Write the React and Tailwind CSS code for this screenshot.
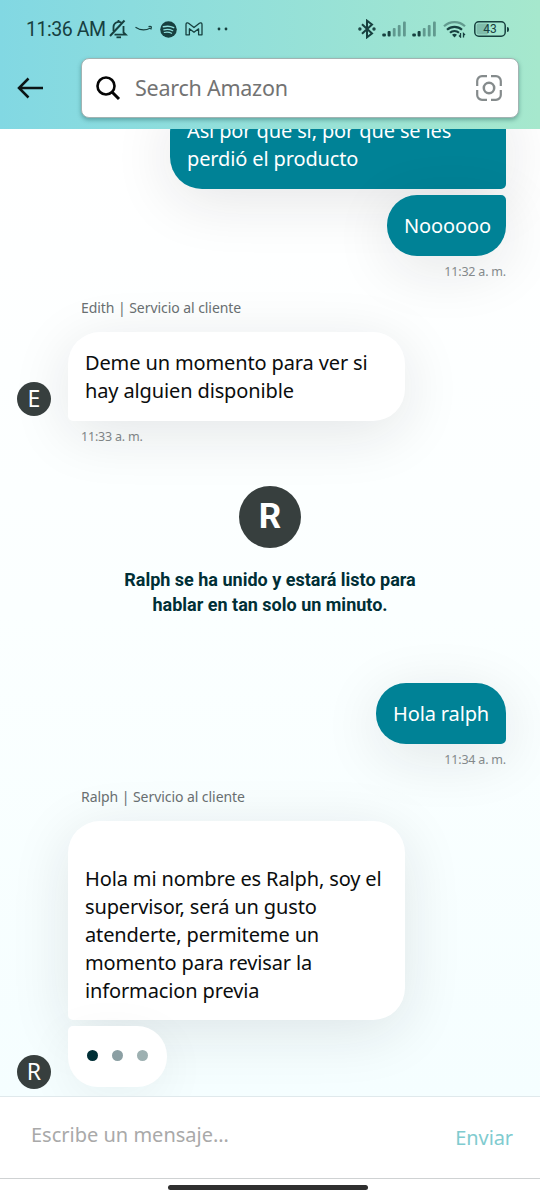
import React from 'react';
import { Fragment } from 'react';

const SHADOW = 'shadow-[0_12px_60px_rgba(25,30,32,0.11)]';

function SignalBars() {
    return (
        <svg width="25" height="16" viewBox="0 0 25 16" fill="#17403f">
            <rect x="0.3" y="12.4" width="3.6" height="3.1" rx="1" />
            <rect x="5.6" y="10" width="3" height="5.5" rx="1" />
            <g opacity="0.45">
                <rect x="10.8" y="7" width="2.8" height="8.500" rx="1" />
                <rect x="15.8" y="4" width="2.8" height="11.500" rx="1" />
                <rect x="21" y="0.500" width="2.800" height="15" rx="1" />
            </g>
        </svg>
    );
}

function StatusBar() {
    return (
        <div className="h-[58px] flex items-center text-[#17403f]">
            <span className="ml-[26px] w-[80px] text-[19.5px] leading-6 tracking-[-0.45px] whitespace-nowrap pt-px font-['Roboto',sans-serif]">11:36 AM</span>
            {/* muted bell */}
            <svg className="ml-[3px]" width="19" height="20" viewBox="0 0 19 20" fill="none" stroke="currentColor" strokeWidth="1.8">
                <path d="M4.500 12V8a5.200 5.200 0 0 1 8-4.300M14.500 7v6.500l2.300 2.200H5.500" />
                <path d="M9.500 2.800V1" />
                <path d="M1 17L15.500 1.500" strokeWidth="2" />
                <path d="M7.500 18.300h4.500" strokeWidth="1.800" />
            </svg>
            <svg className="ml-[7px]" width="18" height="8" viewBox="0 0 18 8" fill="none" stroke="currentColor" strokeWidth="1.2">
                <path d="M0.500 2.300C5 5.300 11 5.500 15.500 3M13.500 1.600c3-.6 3.500 0 2.300 2.800" />
            </svg>
            <svg className="ml-[7px]" width="17" height="17" viewBox="0 0 17 17">
                <circle cx="8.5" cy="8.5" r="8.3" fill="#17403f" />
                <g fill="none" stroke="#8edfdc" strokeLinecap="round">
                    <path d="M3.400 5.800c3.400-1 7.400-.7 10.300.9" strokeWidth="1.500" />
                    <path d="M3.800 8.800c3-.8 6.300-.5 8.900.9" strokeWidth="1.200" />
                    <path d="M4.200 11.500c2.600-.6 5.200-.4 7.400.8" strokeWidth="1.100" />
                </g>
            </svg>
            {/* outlined envelope M */}
            <svg className="ml-[8px]" width="18" height="14" viewBox="0 0 18 14" fill="none" stroke="currentColor" strokeWidth="1.300" strokeLinejoin="round">
                <path d="M1 12.800V2.400C1 .8 2.600.4 3.600 1.200L9 5.500l5.400-4.300c1-.8 2.600-.4 2.600 1.200v10.400h-3.400V6.800L9 10.300 4.400 6.800v6z" />
            </svg>
            <svg className="ml-[14px]" width="12" height="4" viewBox="0 0 12 4" fill="currentColor">
                <circle cx="2" cy="2" r="1.400" />
                <circle cx="9" cy="2" r="1.400" />
            </svg>

            <div className="ml-auto mr-[33px] flex items-center">
                <svg width="18" height="20" viewBox="0 0 18 20" fill="none" stroke="currentColor" strokeWidth="2">
                    <path d="M4 5.300l10 9.200L9 18.300V1.700l5 3.800-10 9.200" />
                    <circle cx="1.900" cy="10" r="0.700" />
                    <circle cx="16" cy="10" r="0.700" />
                </svg>
                <div className="ml-[6px]"><SignalBars /></div>
                <div className="ml-[5px]"><SignalBars /></div>
                <svg className="ml-[6px]" width="24" height="18" viewBox="0 0 24 18" fill="none" stroke="currentColor" strokeWidth="2.200">
                    <path d="M1 6.200a15.500 15.500 0 0 1 21 0" opacity="0.450" />
                    <path d="M4 9.800a11 11 0 0 1 15 0" />
                    <path d="M7 12.800a6.500 6.500 0 0 1 9 0" />
                    <path d="M9 14.800q2.500-2 5 0l-2.500 2.700z" fill="currentColor" stroke="none" />
                    <path d="M17.500 13v4l-1.500-1.500M20.500 17.500v-4l1.500 1.500" strokeWidth="1.300" />
                </svg>
                <div className="ml-[7px] relative w-[32px] h-[16px]">
                    <svg className="absolute inset-0" width="32" height="16" viewBox="0 0 32 16" fill="none">
                        <rect x="2.500" y="2.500" width="12" height="11" rx="2" fill="#17403f" opacity="0.250" />
                        <rect x="0.800" y="0.800" width="30.400" height="14.400" rx="4" stroke="#17403f" strokeWidth="1.500" />
                    </svg>
                    <div className="relative text-center text-[12px] leading-[17px] font-['Roboto',sans-serif]">43</div>
                </div>
                <div className="w-[2px] h-[5px] rounded-r bg-[#17403f] ml-px -mr-[2px]" />
            </div>
        </div>
    );
}

function SearchBar() {
    return (
        <div className="flex items-center">
            <svg className="ml-[17px]" width="27" height="22" viewBox="0 0 27 22" fill="none" stroke="#0b1516" strokeWidth="2.500">
                <path d="M26 11H2M11.500 1.500L2 11l9.500 9.500" />
            </svg>
            <div className="ml-[37px] w-[438px] h-[60px] bg-white rounded-[8px] border border-[#a2b3b2] shadow-[0_2px_4px_rgba(0,60,60,0.35)] flex items-center">
                <svg className="ml-[14px]" width="25" height="25" viewBox="0 0 25 25" fill="none" stroke="#050505">
                    <circle cx="10" cy="10" r="8.500" strokeWidth="2.600" />
                    <path d="M16 16l7 7" strokeWidth="3" />
                </svg>
                <span className="ml-[14px] text-[21.5px] tracking-[-0.25px] text-[#737373] whitespace-nowrap">Search Amazon</span>
                <svg className="ml-auto mr-[16px]" width="26" height="26" viewBox="0 0 26 26" fill="none" stroke="#858b8c" strokeWidth="2.200">
                    <circle cx="13" cy="13" r="5.200" strokeWidth="2.500" />
                    <path d="M1.200 11V6a4.800 4.800 0 0 1 4.800-4.800h5M15 1.200h5a4.800 4.800 0 0 1 4.800 4.800v5M24.800 15v5a4.800 4.800 0 0 1-4.800 4.800h-5M11 24.800H6a4.800 4.800 0 0 1-4.800-4.800v-5" />
                </svg>
            </div>
        </div>
    );
}

function Lines({ lines }) {
    return (
        <div className="whitespace-nowrap tracking-[-0.13px]">
            {lines.map((line, i) => (
                <Fragment key={i}>
                    {line}
                    {i < lines.length - 1 && <br />}
                </Fragment>
            ))}
        </div>
    );
}

function Sent({ className, lines }) {
    return (
        <div className={`self-end mr-[34px] shrink-0 bg-[#008296] text-white text-[20px] leading-7 px-[17px] ${SHADOW} ${className}`}>
            <Lines lines={lines} />
        </div>
    );
}

function Received({ className, lines }) {
    return (
        <div className={`ml-[68px] w-[337px] shrink-0 bg-white text-[#0b0d0d] text-[20px] leading-7 px-[17px] rounded-[32px] rounded-bl-[5px] ${SHADOW} ${className}`}>
            <Lines lines={lines} />
        </div>
    );
}

function Avatar({ letter, className }) {
    return (
        <div className={`absolute left-[17px] w-[34px] h-[34px] rounded-full bg-[#373f3e] text-white text-[23px] leading-[33px] text-center ${className}`}>
            {letter}
        </div>
    );
}

function Time({ className, children }) {
    return <div className={`mt-[6px] h-5 shrink-0 text-[12.5px] leading-5 tracking-[-0.2px] text-[#84898b] ${className}`}>{children}</div>;
}

function Sender({ className, children }) {
    return <div className={`ml-[81px] h-5 shrink-0 text-[14px] leading-5 tracking-[-0.06px] text-[#6a7072] ${className}`}>{children}</div>;
}

export default function App() {
    return (
        <div className="w-[540px] h-[1200px] flex flex-col overflow-hidden bg-white font-['Noto_Sans',sans-serif]">
            <header className="h-[129px] shrink-0 bg-linear-to-r from-[#82d8e3] to-[#a6e8cd] relative z-10">
                <StatusBar />
                <SearchBar />
            </header>

            <main className="h-[967px] shrink-0 overflow-hidden flex flex-col bg-linear-to-b from-[#ffffff] via-[#fbffff] to-[#f5feff]">
                <Sent
                    className="-mt-7 w-[336px] h-[88px] pt-4 rounded-[32px] rounded-tr-[5px] rounded-br-[5px]"
                    lines={['Así por que si, por que se les', 'perdió el producto']}
                />
                <Sent className="mt-[6px] w-[119px] h-[61px] pt-[17px] rounded-[30px] rounded-tr-[5px]" lines={['Noooooo']} />
                <Time className="mr-[34px] text-right">11:32 a. m.</Time>

                <Sender className="mt-4">Edith | Servicio al cliente</Sender>
                <div className="relative mt-[14px] shrink-0">
                    <Received className="h-[89px] pt-[17px]" lines={['Deme un momento para ver si', 'hay alguien disponible']} />
                    <Avatar letter="E" className="bottom-[5px]" />
                </div>
                <Time className="ml-[81px]">11:33 a. m.</Time>

                <div className="mt-[39px] shrink-0 flex flex-col items-center font-['Roboto',sans-serif] font-bold">
                    <div className="w-[62px] h-[62px] rounded-full bg-[#373f3e] text-white text-[35px] leading-[62px] text-center">R</div>
                    <div className="mt-[19px] text-center text-[18px] leading-[25px] text-[#002f36]">
                        <div>Ralph se ha unido y estará listo para</div>
                        <div>hablar en tan solo un minuto.</div>
                    </div>
                </div>

                <Sent className="mt-[66px] w-[130px] h-[61px] pt-[17px] rounded-[30px] rounded-br-[5px]" lines={['Hola ralph']} />
                <Time className="mr-[34px] text-right">11:34 a. m.</Time>

                <Sender className="mt-[17px]">Ralph | Servicio al cliente</Sender>
                <div className="relative mt-[14px] shrink-0">
                    <Received
                        className="h-[199px] pt-4"
                        lines={[
                            '',
                            'Hola mi nombre es Ralph, soy el',
                            'supervisor, será un gusto',
                            'atenderte, permiteme un',
                            'momento para revisar la',
                            'informacion previa',
                        ]}
                    />
                    {/* typing indicator */}
                    <div className="relative mt-[6px] ml-[68px] w-[99px] h-[61px] bg-white rounded-[30px] rounded-tl-[5px] shadow-[0_12px_50px_rgba(25,30,32,0.06)] flex items-center justify-center gap-[14px] pb-[2px]">
                        <div className="w-[11px] h-[11px] rounded-full bg-[#002f36]" />
                        <div className="w-[11px] h-[11px] rounded-full bg-[#8b9fa3]" />
                        <div className="w-[11px] h-[11px] rounded-full bg-[#9db0b1]" />
                    </div>
                    <Avatar letter="R" className="-bottom-[2px]" />
                </div>
            </main>

            <div className="h-[83px] shrink-0 border-t border-t-[#e0e9ec] border-b border-b-[#cfd2d3] bg-white flex items-center justify-between pl-[31px] pr-[27px]">
                <span className="text-[20px] text-[#a9a9a9] pb-[5px] whitespace-nowrap">Escribe un mensaje…</span>
                <span className="text-[20px] tracking-[-0.1px] text-[#80cbcf] pt-px">Enviar</span>
            </div>
            <div className="flex-1 pt-[6px] pl-[168px]">
                <div className="w-[200px] h-[5px] rounded-full bg-[#2f2f2f]" />
            </div>
        </div>
    );
}
